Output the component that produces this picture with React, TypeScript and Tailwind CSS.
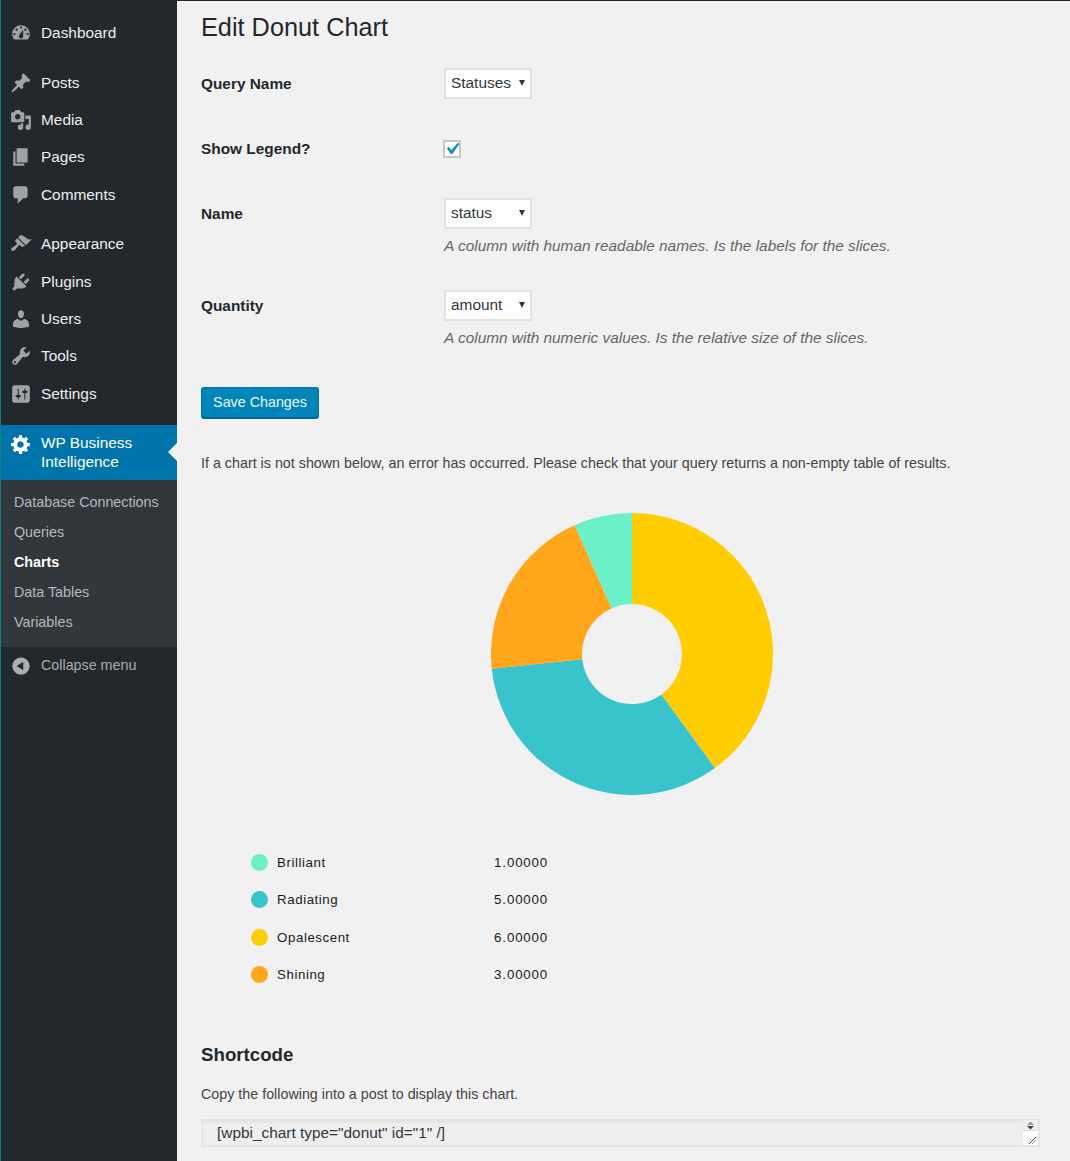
import React from "react";

const icons: Record<string, string> = {
  dashboard:
    "M3.76 16h12.48c1.1-1.37 1.76-3.11 1.76-5 0-4.42-3.58-8-8-8s-8 3.58-8 8c0 1.89.66 3.63 1.76 5zM10 4c.55 0 1 .45 1 1s-.45 1-1 1-1-.45-1-1 .45-1 1-1zM6 6c.55 0 1 .45 1 1s-.45 1-1 1-1-.45-1-1 .45-1 1-1zm8 0c.55 0 1 .45 1 1s-.45 1-1 1-1-.45-1-1 .45-1 1-1zm-5.37 5.55L12 7v6c0 1.1-.9 2-2 2s-2-.9-2-2c0-.57.24-1.08.63-1.45zM4 10c.55 0 1 .45 1 1s-.45 1-1 1-1-.45-1-1 .45-1 1-1zm12 0c.55 0 1 .45 1 1s-.45 1-1 1-1-.45-1-1 .45-1 1-1z",
  posts:
    "M10.44 3.02l1.82-1.82 6.36 6.35-1.83 1.82c-1.05-.68-2.48-.57-3.41.36l-.75.75c-.92.93-1.04 2.35-.35 3.41l-1.83 1.82-2.41-2.41-2.8 2.79c-.42.42-3.38 2.71-3.8 2.29s1.86-3.39 2.28-3.81l2.79-2.79L4.1 9.36l1.83-1.82c1.05.69 2.48.57 3.4-.36l.75-.75c.93-.92 1.05-2.35.36-3.41z",
  media:
    "M13 11V4c0-.55-.45-1-1-1h-1.67L9 1H5L3.67 3H2c-.55 0-1 .45-1 1v7c0 .55.45 1 1 1h10c.55 0 1-.45 1-1zM7 4.5c1.38 0 2.5 1.12 2.5 2.5S8.38 9.5 7 9.5 4.5 8.38 4.5 7 5.62 4.5 7 4.5zM14 6h5v10.5c0 1.38-1.12 2.5-2.5 2.5S14 17.88 14 16.5s1.12-2.5 2.5-2.5c.17 0 .34.02.5.05V9h-3V6zm-4 8.05V13h2v3.5c0 1.38-1.12 2.5-2.5 2.5S7 17.88 7 16.5 8.12 14 9.5 14c.17 0 .34.02.5.05z",
  pages: "M6 15V2h10v13H6zm-1 1h8v2H3V5h2v11z",
  comments:
    "M5 2h9c1.1 0 2 .9 2 2v7c0 1.1-.9 2-2 2h-2l-5 5v-5H5c-1.1 0-2-.9-2-2V4c0-1.1.9-2 2-2z",
  appearance:
    "M14.48 11.06L7.41 3.99l1.5-1.5c.5-.56 2.3-.47 3.51.32 1.21.8 1.43 1.28 2.91 2.1 1.18.64 2.45 1.26 4.45.85zm-.71.71L6.7 4.7 4.93 6.47c-.39.39-.39 1.02 0 1.41l1.06 1.06c.39.39.39 1.03 0 1.42-.6.6-1.43 1.11-2.21 1.69-.35.26-.7.53-1.01.84C1.43 13.23.4 14.85 1.4 15.85c1 .99 2.62-.04 3.96-1.38.31-.31.58-.66.84-1.01.58-.78 1.09-1.61 1.69-2.21.39-.39 1.02-.39 1.41 0l1.06 1.06c.39.39 1.02.39 1.41 0z",
  plugins:
    "M13.11 4.36L9.87 7.6 8 5.73l3.24-3.24c.35-.34 1.05-.2 1.56.32.52.51.66 1.21.31 1.55zm-8 1.77l.91-1.12 9.01 9.01-1.19.84c-.71.71-2.63 1.16-3.82 1.16H6.14L4.9 17.26c-.59.59-1.54.59-2.12 0-.59-.58-.59-1.53 0-2.12l1.24-1.24v-3.88c0-1.13.4-3.19 1.09-3.89zm7.26 3.97l3.24-3.24c.34-.35 1.04-.21 1.55.31.52.51.66 1.21.31 1.55l-3.24 3.25z",
  users:
    "M10 9.25c-2.27 0-2.73-3.44-2.73-3.44C7 4.02 7.82 2 9.97 2c2.16 0 2.98 2.02 2.71 3.81 0 0-.41 3.44-2.68 3.44zm0 2.57L12.72 10c2.39 0 4.52 2.33 4.52 4.53v2.49s-3.65 1.13-7.24 1.13c-3.65 0-7.24-1.13-7.24-1.13v-2.49c0-2.25 1.94-4.48 4.47-4.48z",
  tools:
    "M16.68 9.77c-1.34 1.34-3.3 1.67-4.95.99l-5.41 6.52c-.99.99-2.59.99-3.58 0s-.99-2.59 0-3.57l6.52-5.42c-.68-1.65-.35-3.61.99-4.95 1.28-1.28 3.12-1.62 4.72-1.06l-2.89 2.89 2.82 2.82 2.86-2.87c.53 1.58.18 3.39-1.08 4.65zM3.81 16.21c.4.39 1.04.39 1.43 0 .4-.4.4-1.04 0-1.43-.39-.4-1.03-.4-1.43 0-.39.39-.39 1.03 0 1.43z",
  settings:
    "M18 16V4c0-1.1-.9-2-2-2H4c-1.1 0-2 .9-2 2v12c0 1.1.9 2 2 2h12c1.1 0 2-.9 2-2zM8 11h1c.55 0 1 .45 1 1s-.45 1-1 1H8v1.5c0 .28-.22.5-.5.5s-.5-.22-.5-.5V13H6c-.55 0-1-.45-1-1s.45-1 1-1h1V5.5c0-.28.22-.5.5-.5s.5.22.5.5V11zm5-2h-1c-.55 0-1-.45-1-1s.45-1 1-1h1V5.5c0-.28.22-.5.5-.5s.5.22.5.5V7h1c.55 0 1 .45 1 1s-.45 1-1 1h-1v5.5c0 .28-.22.5-.5.5s-.5-.22-.5-.5V9z",
  gear:
    "M18 12h-2.18c-.17.7-.44 1.35-.81 1.93l1.54 1.54-2.1 2.1-1.54-1.54c-.58.36-1.23.63-1.91.79V19H8v-2.18c-.68-.16-1.33-.43-1.91-.79l-1.54 1.54-2.12-2.12 1.54-1.54c-.36-.58-.63-1.23-.79-1.91H1V9.03h2.17c.16-.7.44-1.35.8-1.94L2.43 5.55l2.1-2.1 1.54 1.54c.58-.37 1.24-.64 1.93-.81V2h3v2.18c.68.16 1.33.43 1.91.79l1.54-1.54 2.12 2.12-1.54 1.54c.36.59.64 1.24.8 1.94H18V12zm-8.5 1.5c1.66 0 3-1.34 3-3s-1.34-3-3-3-3 1.34-3 3 1.34 3 3 3z",
  collapse:
    "M10 2.16c4.33 0 7.84 3.51 7.84 7.84s-3.51 7.84-7.84 7.84S2.16 14.33 2.16 10 5.71 2.16 10 2.16zm2 11.72V6.12L6.18 9.97z",
};

function Icon({ name, className }: { name: string; className: string }) {
  return (
    <svg viewBox="0 0 20 20" className={className} fill="currentColor" fillRule="evenodd">
      <path d={icons[name]} />
    </svg>
  );
}

function MenuItem({ icon, label, className = "" }: { icon: string; label: string; className?: string }) {
  return (
    <div className={`flex h-[37px] items-center pl-[9px] text-[15.4px] text-[#eeeeee] ${className}`}>
      <Icon name={icon} className="h-[22px] w-[22px] shrink-0 text-[#9ea3a8]" />
      <span className="ml-[9px]">{label}</span>
    </div>
  );
}

function polar(r: number, deg: number) {
  const a = (deg * Math.PI) / 180;
  return `${(141 + r * Math.sin(a)).toFixed(2)} ${(141 - r * Math.cos(a)).toFixed(2)}`;
}

function slice(from: number, to: number) {
  const large = to - from > 180 ? 1 : 0;
  return `M${polar(141, from)}A141 141 0 ${large} 1 ${polar(141, to)}L${polar(50, to)}A50 50 0 ${large} 0 ${polar(50, from)}Z`;
}

const slices = [
  { from: 0, to: 144, color: "#ffcd02" },
  { from: 144, to: 264, color: "#39c3cd" },
  { from: 264, to: 336, color: "#ffa61a" },
  { from: 336, to: 360, color: "#6cf0c8" },
];

const legend = [
  { name: "Brilliant", value: "1.00000", color: "bg-[#6cf0c8]", gap: "" },
  { name: "Radiating", value: "5.00000", color: "bg-[#39c3cd]", gap: "" },
  { name: "Opalescent", value: "6.00000", color: "bg-[#ffcd02]", gap: "mt-[1px]" },
  { name: "Shining", value: "3.00000", color: "bg-[#ffa61a]", gap: "" },
];

const gripDots = [
  [6, 0], [5, 1], [4, 2], [3, 3], [2, 4], [1, 5], [0, 6], [6, 3], [5, 4], [4, 5], [3, 6],
];

function FormSelect({ value, options }: { value: string; options: string[] }) {
  return (
    <div className="relative h-[31px] w-[88px]">
      <select
        defaultValue={value}
        className="h-[31px] w-[88px] appearance-none border-2 border-[#e2e2e2] bg-white pb-[2px] pl-[5px] text-[15.4px] text-[#32373c] outline-none"
      >
        {options.map((o) => (
          <option key={o}>{o}</option>
        ))}
      </select>
      <span className="pointer-events-none absolute top-[12px] right-[7px] h-0 w-0 border-x-[3px] border-t-[6px] border-x-transparent border-t-[#32373c]" />
    </div>
  );
}

function Help({ children }: { children: string }) {
  return <p className="mt-[6px] text-[15.4px] leading-[21px] text-[#666666] italic">{children}</p>;
}

const labelClass = "w-[243px] shrink-0 pt-[6px] text-[15.4px] leading-[19px] font-bold text-[#23282d]";

export default function App() {
  return (
    <div className="flex h-[1161px] w-[1070px] overflow-hidden bg-[#f1f1f1] font-['Liberation_Sans',Arial,sans-serif]">
      <aside className="flex w-[177px] shrink-0 flex-col border-l border-l-[#13807f] bg-[#23282d]">
        <div className="pt-[14px]">
          <MenuItem icon="dashboard" label="Dashboard" />
          <MenuItem icon="posts" label="Posts" className="mt-[13px]" />
          <MenuItem icon="media" label="Media" />
          <MenuItem icon="pages" label="Pages" />
          <MenuItem icon="comments" label="Comments" className="mt-[1px]" />
          <MenuItem icon="appearance" label="Appearance" className="mt-[12px]" />
          <MenuItem icon="plugins" label="Plugins" className="mt-[1px]" />
          <MenuItem icon="users" label="Users" />
          <MenuItem icon="tools" label="Tools" />
          <MenuItem icon="settings" label="Settings" className="mt-[1px]" />
        </div>
        <div className="relative mt-[13px] flex h-[55px] bg-[#0073aa] pt-[8px] pl-[9px] text-[15.4px] leading-[19px] text-white">
          <Icon name="gear" className="h-[22px] w-[22px] shrink-0" />
          <span className="ml-[9px]">
            WP Business
            <br />
            Intelligence
          </span>
          <span className="absolute top-[18px] right-0 h-0 w-0 border-y-[9px] border-r-[9px] border-y-transparent border-r-[#f1f1f1]" />
        </div>
        <div className="bg-[#32373c] pt-[8px] pb-[9px] pl-[13px] text-[14.3px] text-[#b4b9be]">
          <div className="flex h-[30px] items-center">Database Connections</div>
          <div className="flex h-[30px] items-center">Queries</div>
          <div className="flex h-[30px] items-center font-bold text-white">Charts</div>
          <div className="flex h-[30px] items-center">Data Tables</div>
          <div className="flex h-[30px] items-center">Variables</div>
        </div>
        <div className="flex h-[37px] items-center pl-[9px] text-[14.3px] text-[#a8adb2]">
          <Icon name="collapse" className="h-[22px] w-[22px] shrink-0 text-[#a8adb2]" />
          <span className="ml-[9px]">Collapse menu</span>
        </div>
      </aside>

      <main className="min-w-0 flex-1 border-t border-t-[#23282d] pr-[30px] pl-[24px] text-[14.3px] text-[#444444]">
        <h1 className="mt-[11px] text-[25.3px] leading-[30px] font-normal text-[#23282d]">Edit Donut Chart</h1>

        <div className="mt-[26px] flex">
          <label className={labelClass}>Query Name</label>
          <FormSelect value="Statuses" options={["Statuses"]} />
        </div>

        <div className="mt-[40px] flex items-center">
          <label className="w-[242px] shrink-0 text-[15.4px] leading-[19px] font-bold text-[#23282d]">Show Legend?</label>
          <span className="flex h-[18px] w-[18px] items-center justify-center border-2 border-[#c4c7cb] bg-white">
            <svg viewBox="0 0 20 20" className="h-[24px] w-[24px] shrink-0 text-[#1e8cbe]" fill="currentColor">
              <path d="M14.83 4.89l1.34.94-5.81 8.38H9.02L5.78 9.67l1.34-1.25 2.57 2.4z" />
            </svg>
          </span>
        </div>

        <div className="mt-[40px] flex">
          <label className={labelClass}>Name</label>
          <div>
            <FormSelect value="status" options={["status"]} />
            <Help>A column with human readable names. Is the labels for the slices.</Help>
          </div>
        </div>

        <div className="mt-[34px] flex">
          <label className={labelClass}>Quantity</label>
          <div>
            <FormSelect value="amount" options={["amount"]} />
            <Help>A column with numeric values. Is the relative size of the slices.</Help>
          </div>
        </div>

        <button className="mt-[39px] block h-[32px] w-[118px] rounded-[3px] border border-[#0073aa] border-b-2 border-b-[#006799] bg-[#0085ba] text-[14.3px] text-[#f1f9fc]">
          Save Changes
        </button>

        <p className="mt-[34px] text-[14.3px] leading-[20px]">
          If a chart is not shown below, an error has occurred. Please check that your query returns a non-empty table of results.
        </p>

        <div className="mt-[40px] ml-[290px] h-[282px] w-[282px]">
          <svg viewBox="0 0 282 282" className="h-[282px] w-[282px]">
            {slices.map((s) => (
              <path key={s.color} d={slice(s.from, s.to)} fill={s.color} />
            ))}
          </svg>
        </div>

        <div className="mt-[49px] ml-[49.5px] text-[13.3px] tracking-[0.55px] text-[#1a1a1a]">
          {legend.map((l) => (
            <div key={l.name} className={`flex h-[37px] items-center ${l.gap}`}>
              <span className={`h-[17.6px] w-[17.6px] rounded-full ${l.color}`} />
              <span className="ml-[9px] w-[217px]">{l.name}</span>
              <span className="tracking-[0.85px]">{l.value}</span>
            </div>
          ))}
        </div>

        <h2 className="mt-[50px] text-[18.7px] leading-[24px] font-bold text-[#23282d]">Shortcode</h2>
        <p className="mt-[17px] text-[14.3px] leading-[20px]">Copy the following into a post to display this chart.</p>
        <div className="relative mt-[15px] h-[28px] w-[839px]">
          <textarea
            readOnly
            rows={1}
            defaultValue={'[wpbi_chart type="donut" id="1" /]'}
            className="block h-[28px] w-[839px] resize-none overflow-hidden border-2 border-[#e4e4e4] bg-[#eeeeee] py-0 pl-[14px] text-[15.4px] leading-[24px] text-[#32373c] shadow-[inset_0_2px_2px_rgba(0,0,0,0.04)] outline-none"
          />
          <div className="absolute top-[1px] right-[2px] flex h-[25px] w-[15px] flex-col">
            <div className="flex h-[10px] items-center justify-center bg-[#eeeeee]">
              <svg viewBox="0 0 9 9" className="h-[9px] w-[9px]">
                <path d="M4.5 0.5L8 4H1z" fill="#9a9a9a" />
                <path d="M1 5h7L4.5 8.5z" fill="#444444" />
              </svg>
            </div>
            <div className="flex flex-1 items-end justify-end border-t border-t-[#dddddd] bg-white">
              <svg viewBox="0 0 7 7" className="mr-[2px] mb-[1px] h-[7px] w-[7px]" shapeRendering="crispEdges">
                {gripDots.map(([x, y]) => (
                  <rect key={`${x}-${y}`} x={x} y={y} width="1" height="1" fill={(x + y) % 2 === 0 ? "#444444" : "#999999"} />
                ))}
              </svg>
            </div>
          </div>
        </div>
      </main>
    </div>
  );
}
